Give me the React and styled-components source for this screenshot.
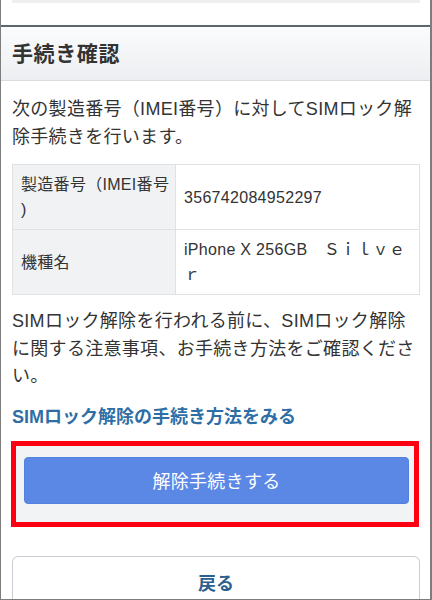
import styled, { createGlobalStyle } from 'styled-components';

const GlobalStyle = createGlobalStyle`
  body {
    margin: 0;
    background: #fff;
    font-family: 'Liberation Sans', 'Noto Sans CJK JP', sans-serif;
    color: #333;
  }
`;

const Frame = styled.div`
  width: 432px;
  height: 600px;
  box-sizing: border-box;
  border-left: 1px solid #7d7d7d;
  border-right: 2px solid #7d7d7d;
  border-bottom: 1px solid #7d7d7d;
  overflow: hidden;
  background: #fff;
`;

const TopStrip = styled.div`
  height: 25px;
`;

const StripBar = styled.div`
  height: 3px;
  margin: 0 10px 0 11px;
  background: #eeeff1;
`;

const Header = styled.h1`
  margin: 0;
  height: 56px;
  box-sizing: border-box;
  border-top: 2px solid #5c6670;
  border-bottom: 1px solid #d8dbdf;
  background: linear-gradient(#fbfcfd, #eceef1);
  padding: 0 0 4px 11px;
  display: flex;
  align-items: center;
  font-size: 21px;
  letter-spacing: 0.6px;
  font-weight: bold;
  color: #333;
`;

const Body = styled.div`
  padding: 0 10px 0 11px;
`;

const Text = styled.p`
  margin: ${(p) => p.$mt || 0}px 0 0;
  font-size: 18px;
  line-height: 27.5px;
  letter-spacing: 0.3px;
  color: #333;
`;

const Table = styled.table`
  width: 100%;
  margin-top: 13px;
  border-collapse: collapse;
  table-layout: fixed;
  font-size: 16px;
  line-height: 25px;
  letter-spacing: 0.3px;
  color: #333;
`;

const Th = styled.th`
  width: 163px;
  padding: 7px 4px 7px 8px;
  height: 65px;
  box-sizing: border-box;
  border: 1px solid #dfe1e4;
  background: #f1f2f4;
  font-weight: normal;
  text-align: left;
  vertical-align: middle;
  line-break: anywhere;
`;

const Td = styled.td`
  padding: 7px 8px;
  height: 65px;
  box-sizing: border-box;
  border: 1px solid #dfe1e4;
  vertical-align: middle;
`;

const Link = styled.a`
  display: block;
  margin-top: 12px;
  font-size: 18px;
  line-height: 28px;
  font-weight: bold;
  color: #2f6ea5;
  text-decoration: none;
`;

const Highlight = styled.div`
  margin: 10px 1px 0 -1px;
  border: 5px solid #ff0012;
  background: #f2f3f5;
  padding: 11px 5px 18px 8px;
`;

const PrimaryButton = styled.button`
  display: block;
  width: 100%;
  height: 47px;
  border: 1px solid #5281df;
  border-radius: 4px;
  background: #5b88e5;
  color: #fff;
  font-family: inherit;
  font-size: 18px;
  letter-spacing: 0.3px;
`;

const BackButton = styled.button`
  display: block;
  width: 100%;
  height: 52px;
  margin-top: 29px;
  border: 1px solid #c9cdd3;
  border-radius: 6px;
  background: #fff;
  color: #2c5f8c;
  font-family: inherit;
  font-size: 18px;
  font-weight: bold;
`;

export default function App() {
  return (
    <Frame>
      <GlobalStyle />
      <TopStrip>
        <StripBar />
      </TopStrip>
      <Header>手続き確認</Header>
      <Body>
        <Text $mt={15}>次の製造番号（IMEI番号）に対してSIMロック解除手続きを行います。</Text>
        <Table>
          <tbody>
            <tr>
              <Th>製造番号（IMEI番号)</Th>
              <Td>356742084952297</Td>
            </tr>
            <tr>
              <Th>機種名</Th>
              <Td>iPhone X 256GB　Ｓｉｌｖｅｒ</Td>
            </tr>
          </tbody>
        </Table>
        <Text $mt={13}>
          SIMロック解除を行われる前に、SIMロック解除に関する注意事項、お手続き方法をご確認ください。
        </Text>
        <Link href="#">SIMロック解除の手続き方法をみる</Link>
        <Highlight>
          <PrimaryButton>解除手続きする</PrimaryButton>
        </Highlight>
        <BackButton>戻る</BackButton>
      </Body>
    </Frame>
  );
}
